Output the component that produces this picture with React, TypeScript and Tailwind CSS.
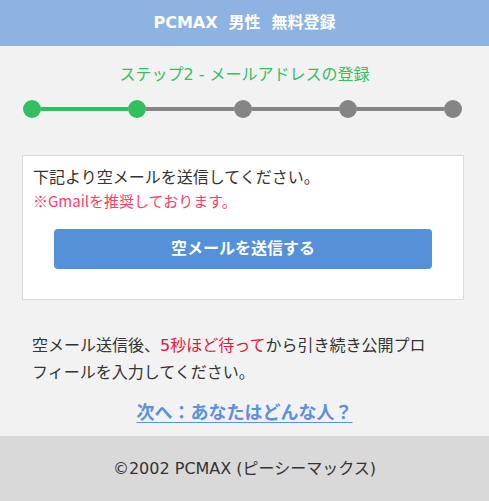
import React from "react";

const font = { fontFamily: '"DejaVu Sans", "Noto Sans CJK JP", sans-serif' };
const cjk = { fontFamily: '"Noto Sans CJK JP", sans-serif' };

function Dot({ on }: { on: boolean }) {
  return <div className={`w-[18px] h-[18px] rounded-full shrink-0 ${on ? "bg-[#30c060]" : "bg-[#858585]"}`} />;
}
function Seg({ on }: { on: boolean }) {
  return <div className={`flex-1 h-[4px] ${on ? "bg-[#30c060]" : "bg-[#858585]"}`} />;
}

export default function App() {
  return (
    <div className="w-[489px] h-[501px] bg-[#f2f2f2] text-[#333] flex flex-col" style={font}>
      <header className="h-[46px] bg-[#8db3e3] flex items-center justify-center gap-[11px] text-white font-bold text-[16px]">
        <span>PCMAX</span>
        <span>男性</span>
        <span>無料登録</span>
      </header>
      <div className="mt-[17px] text-center text-[16px] leading-[24px] text-[#33bf5f]">ステップ2 - メールアドレスの登録</div>
      <div className="mt-[13px] ml-[23px] w-[439px] flex items-center">
        <Dot on />
        <Seg on />
        <Dot on />
        <Seg on={false} />
        <Dot on={false} />
        <Seg on={false} />
        <Dot on={false} />
        <Seg on={false} />
        <Dot on={false} />
      </div>
      <div className="mt-[37px] ml-[22px] w-[442px] bg-white border border-[#dcdcdc] pt-[10px] px-[10px] pb-[30px]">
        <div className="text-[16px] leading-[24px]">下記より空メールを送信してください。</div>
        <div className="text-[15px] leading-[22px] text-[#ff3d6a]" style={cjk}>※Gmailを推奨しております。</div>
        <div className="mt-[17px] mx-auto w-[378px] h-[40px] rounded-[4px] bg-[#5590d8] text-white font-bold text-[16px] flex items-center justify-center">
          空メールを送信する
        </div>
      </div>
      <p className="mt-[32px] pl-[32px] pr-[56px] text-[16px] leading-[27px]">
        空メール送信後、<span className="text-[#e8173f]">5秒ほど待って</span>から引き続き公開プロフィールを入力してください。
      </p>
      <div className="mt-[14px] text-center">
        <a className="text-[18px] leading-[26px] font-bold text-[#5a92de] underline underline-offset-[3px]">次へ：あなたはどんな人？</a>
      </div>
      <footer className="mt-auto h-[65px] bg-[#d9d9d9] flex items-center justify-center text-[16px] text-[#333]">
        ©2002 PCMAX (ピーシーマックス)
      </footer>
    </div>
  );
}
